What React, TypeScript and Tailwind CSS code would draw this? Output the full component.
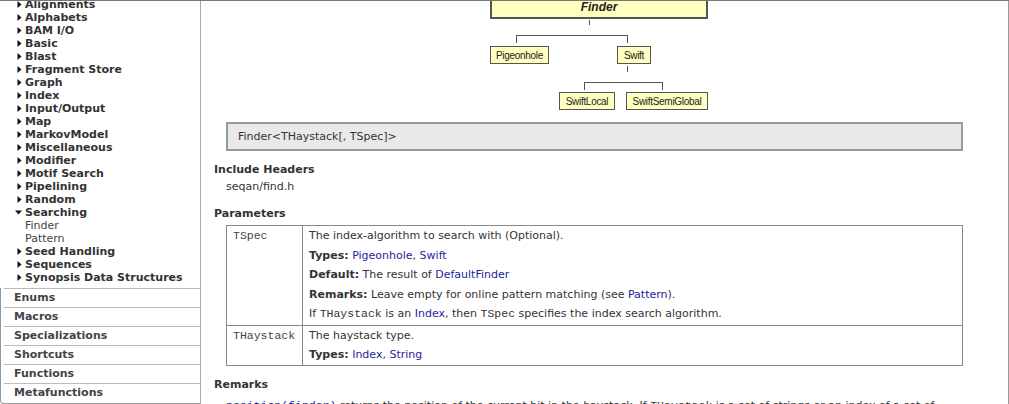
import React from "react";

const treeItems: { label: string; kind: "closed" | "open" | "child" }[] = [
  { label: "Alignments", kind: "closed" },
  { label: "Alphabets", kind: "closed" },
  { label: "BAM I/O", kind: "closed" },
  { label: "Basic", kind: "closed" },
  { label: "Blast", kind: "closed" },
  { label: "Fragment Store", kind: "closed" },
  { label: "Graph", kind: "closed" },
  { label: "Index", kind: "closed" },
  { label: "Input/Output", kind: "closed" },
  { label: "Map", kind: "closed" },
  { label: "MarkovModel", kind: "closed" },
  { label: "Miscellaneous", kind: "closed" },
  { label: "Modifier", kind: "closed" },
  { label: "Motif Search", kind: "closed" },
  { label: "Pipelining", kind: "closed" },
  { label: "Random", kind: "closed" },
  { label: "Searching", kind: "open" },
  { label: "Finder", kind: "child" },
  { label: "Pattern", kind: "child" },
  { label: "Seed Handling", kind: "closed" },
  { label: "Sequences", kind: "closed" },
  { label: "Synopsis Data Structures", kind: "closed" },
];

const lowerItems = ["Enums", "Macros", "Specializations", "Shortcuts", "Functions", "Metafunctions"];

function Tri({ open }: { open: boolean }) {
  return (
    <svg width="9" height="9" viewBox="0 0 9 9" className="shrink-0">
      {open ? <polygon points="0,2.5 7,2.5 3.5,6.5" fill="#111" /> : <polygon points="1.5,1 5.5,4.5 1.5,8" fill="#111" />}
    </svg>
  );
}

function Node({ left, top, w, label }: { left: number; top: number; w: number; label: string }) {
  return (
    <div
      className="absolute h-[18px] border border-[#555] bg-[#ffffc0] flex items-center justify-center text-[10px] tracking-[-0.3px] text-[#222]"
      style={{ left, top, width: w, fontFamily: '"Liberation Sans", Arial, sans-serif' }}
    >
      {label}
    </div>
  );
}

const A = ({ children }: { children: React.ReactNode }) => <span className="text-[#1d1d9e]">{children}</span>;
const Code = ({ children }: { children: React.ReactNode }) => (
  <span className="text-[11.5px]" style={{ fontFamily: '"Liberation Mono", "Courier New", monospace' }}>
    {children}
  </span>
);

export default function App() {
  return (
    <div
      className="w-[1009px] h-[404px] overflow-hidden bg-white border-t border-[#777] flex text-[11px] text-[#333]"
      style={{ fontFamily: '"DejaVu Sans", Verdana, sans-serif' }}
    >
      <aside className="w-[201px] shrink-0 border-r border-[#aaa] flex flex-col">
        <div className="-mt-[3px]">
          {treeItems.map((it) => (
            <div key={it.label} className="h-[13px] leading-[13px] flex items-center whitespace-nowrap">
              {it.kind === "child" ? (
                <span className="pl-[25px] text-[#444]">{it.label}</span>
              ) : (
                <>
                  <span className={it.kind === "open" ? "pl-[15px] w-[25px]" : "pl-[16px] w-[25px]"}>
                    <Tri open={it.kind === "open"} />
                  </span>
                  <span className="font-bold">{it.label}</span>
                </>
              )}
            </div>
          ))}
        </div>
        <div className="mt-[4px] flex-1 border-l border-b border-[#999] rounded-bl-[4px]">
          {lowerItems.map((l) => (
            <div key={l} className="ml-[3px] border-t border-[#bbb] h-[19px] leading-[18px] pl-[10px] font-bold text-[#444]">
              {l}
            </div>
          ))}
        </div>
      </aside>
      <main className="flex-1 border-r border-[#999] pl-[13px]">
        <div className="relative h-[121px] -ml-[13px]">
          <div
            className="absolute border-2 border-[#555] bg-[#ffffc0] flex items-end justify-center pb-[1px] font-bold italic text-[12px] text-[#222]"
            style={{ left: 289, top: -5, width: 218, height: 23, fontFamily: '"Liberation Sans", Arial, sans-serif' }}
          >
            Finder
          </div>
          <svg className="absolute left-0 top-0" width="800" height="121">
            <g stroke="#555" strokeWidth="1" fill="none" shapeRendering="crispEdges">
              <line x1="388.5" y1="19" x2="388.5" y2="24" />
              <line x1="315" y1="34.5" x2="427" y2="34.5" />
              <line x1="315.5" y1="34" x2="315.5" y2="42" />
              <line x1="426.5" y1="34" x2="426.5" y2="42" />
              <line x1="426.5" y1="65" x2="426.5" y2="71" />
              <line x1="383" y1="81.5" x2="462" y2="81.5" />
              <line x1="383.5" y1="81" x2="383.5" y2="89" />
              <line x1="461.5" y1="81" x2="461.5" y2="89" />
            </g>
          </svg>
          <Node left={289} top={45} w={59} label="Pigeonhole" />
          <Node left={416} top={45} w={34} label="Swift" />
          <Node left={358} top={91} w={56} label="SwiftLocal" />
          <Node left={425} top={91} w={82} label="SwiftSemiGlobal" />
        </div>
        <div className="ml-[12px] mr-[45px] h-[29px] border-2 border-[#999] bg-[#e9e9e9] flex items-center pl-[10px] pt-[2px]">
          Finder&lt;THaystack[, TSpec]&gt;
        </div>
        <div className="mt-[11px] leading-[16px] font-bold">Include Headers</div>
        <div className="mt-[1px] leading-[16px] pl-[12px]">seqan/find.h</div>
        <div className="mt-[11px] leading-[16px] font-bold">Parameters</div>
        <div className="mt-[3px] ml-[12px] mr-[45px] border border-[#888] leading-[19.5px]">
          <div className="flex border-b border-[#888]">
            <div className="w-[76px] shrink-0 border-r border-[#888] pl-[6px] text-[#444]">
              <Code>TSpec</Code>
            </div>
            <div className="pl-[6px] pb-[1px]">
              <div>The index-algorithm to search with (Optional).</div>
              <div>
                <b>Types:</b> <A>Pigeonhole</A>, <A>Swift</A>
              </div>
              <div>
                <b>Default:</b> The result of <A>DefaultFinder</A>
              </div>
              <div>
                <b>Remarks:</b> Leave empty for online pattern matching (see <A>Pattern</A>).
              </div>
              <div>
                If <Code>THaystack</Code> is an <A>Index</A>, then <Code>TSpec</Code> specifies the index search algorithm.
              </div>
            </div>
          </div>
          <div className="flex">
            <div className="w-[76px] shrink-0 border-r border-[#888] pl-[6px] text-[#444]">
              <Code>THaystack</Code>
            </div>
            <div className="pl-[6px]">
              <div>The haystack type.</div>
              <div>
                <b>Types:</b> <A>Index</A>, <A>String</A>
              </div>
            </div>
          </div>
        </div>
        <div className="mt-[11px] leading-[16px] font-bold">Remarks</div>
        <div className="mt-[5px] leading-[16px] pl-[12px] whitespace-nowrap">
          <span className="text-[#1d1d9e]">
            <Code>position(finder)</Code>
          </span>{" "}
          returns the position of the current hit in the haystack. If <Code>THaystack</Code> is a set of strings or an index of a set of
        </div>
      </main>
    </div>
  );
}
